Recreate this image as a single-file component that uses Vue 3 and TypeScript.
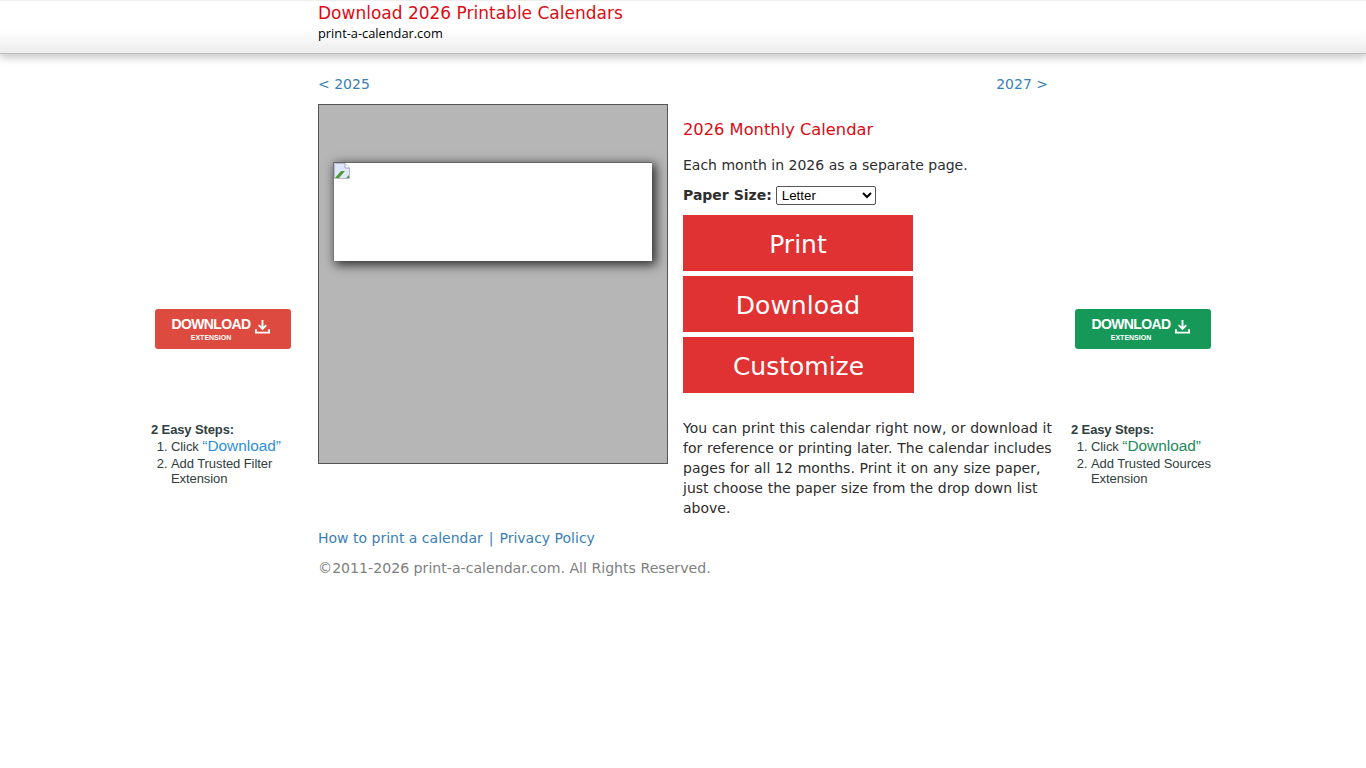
<script setup lang="ts">
const ads = [
  { kind: 'red', item: 'Add Trusted Filter' },
  { kind: 'green', item: 'Add Trusted Sources' },
]
</script>

<template>
  <div class="page">
    <header class="top">
      <div class="top-inner">
        <div class="top-title">Download 2026 Printable Calendars</div>
        <div class="top-sub">print-a-calendar.com</div>
      </div>
    </header>
    <div class="columns">
      <aside class="ad">
        <a class="ad-btn red">
          <span class="ad-lines"><span class="ad-main">DOWNLOAD</span><span class="ad-small">EXTENSION</span></span>
          <svg class="ad-icon" viewBox="0 0 16 16" width="15" height="15" fill="none" stroke="#fff" stroke-width="2"><path d="M8 1v9M4 6.500L8 10.500 12 6.500M1 11v3.500h14V11"/></svg>
        </a>
        <div class="steps">
          <b>2 Easy Steps:</b>
          <ol>
            <li class="first">Click <span class="dl blue">“Download”</span></li>
            <li>{{ ads[0].item }} Extension</li>
          </ol>
        </div>
      </aside>
      <main class="center">
        <nav class="years"><a>&lt; 2025</a><a>2027 &gt;</a></nav>
        <section class="body">
          <div class="preview">
            <div class="sheet">
              <svg class="broken" viewBox="0 0 16 16" width="16" height="16">
                <path d="M0.500 0.500H11L15.500 5V15.500H0.500Z" fill="#dfe8fb" stroke="#b8b8c8" />
                <path d="M11 0.500V5H15.500" fill="#fff" stroke="#a0a0d0" />
                <path d="M1 15L7 8H11L5 15Z" fill="#4c9a35" />
                <path d="M12 15L15 12V15Z" fill="#4c9a35" />
              </svg>
            </div>
          </div>
          <div class="info">
            <h1>2026 Monthly Calendar</h1>
            <p class="lead">Each month in 2026 as a separate page.</p>
            <div class="paper">
              <label for="paper">Paper Size:</label>
              <select id="paper"><option>Letter</option></select>
            </div>
            <div class="actions">
              <a class="act w230">Print</a>
              <a class="act w230">Download</a>
              <a class="act w231">Customize</a>
            </div>
            <p class="desc">You can print this calendar right now, or download it for reference or printing later. The calendar includes pages for all 12 months. Print it on any size paper, just choose the paper size from the drop down list above.</p>
          </div>
        </section>
        <div class="links"><a>How to print a calendar</a><span class="sep">|</span><a>Privacy Policy</a></div>
        <div class="copy">©2011-2026 print-a-calendar.com. All Rights Reserved.</div>
      </main>
      <aside class="ad">
        <a class="ad-btn green">
          <span class="ad-lines"><span class="ad-main">DOWNLOAD</span><span class="ad-small">EXTENSION</span></span>
          <svg class="ad-icon" viewBox="0 0 16 16" width="15" height="15" fill="none" stroke="#fff" stroke-width="2"><path d="M8 1v9M4 6.500L8 10.500 12 6.500M1 11v3.500h14V11"/></svg>
        </a>
        <div class="steps">
          <b>2 Easy Steps:</b>
          <ol>
            <li class="first">Click <span class="dl grn">“Download”</span></li>
            <li>{{ ads[1].item }} Extension</li>
          </ol>
        </div>
      </aside>
    </div>
  </div>
</template>

<style scoped>
.page {
  font-family: "DejaVu Sans", Verdana, sans-serif;
  font-size: 14px;
  color: #2d2d2d;
  background: #fff;
  min-height: 768px;
}
.top {
  height: 54px;
  box-sizing: border-box;
  border-top: 1px solid #eee;
  border-bottom: 1px solid #bdbdbd;
  background: linear-gradient(#fff 0%, #fff 55%, #ececec 100%);
  box-shadow: 0 4px 8px rgba(0, 0, 0, 0.22);
  padding-left: 318px;
}
.top-inner { padding-top: 2px; }
.top-title { color: #dd0b14; font-size: 17px; line-height: 21px; }
.top-sub { color: #000; font-size: 12.8px; line-height: 19px; font-family: "Open Sans", sans-serif; }
.columns { display: flex; align-items: flex-start; }
.ad { width: 167px; box-sizing: border-box; font-family: "Liberation Sans", Arial, sans-serif; }
.columns > .ad:first-child { margin-left: 151px; }
.ad-btn {
  display: flex;
  width: 136px;
  height: 40px;
  margin: 255px 0 0 4px;
  border-radius: 3px;
  color: #fff;
  box-sizing: border-box;
  padding: 7px 0 0 16px;
  gap: 4px;
}
.red { background: #dd4b40; }
.green { background: #169958; }
.ad-lines { display: flex; flex-direction: column; align-items: center; width: 80px; }
.ad-main { font-size: 14px; font-weight: 700; line-height: 17px; letter-spacing: -0.6px; }
.ad-small { font-size: 7px; font-weight: 700; line-height: 9px; }
.ad-icon { margin-top: 3px; }
.steps { margin-top: 73px; font-size: 13px; line-height: 15px; color: #2f3e3e; }
.steps b { display: block; line-height: 16px; letter-spacing: -0.12px; }
.steps ol { margin: 0; padding-left: 20px; }
.steps li { letter-spacing: -0.08px; }
.steps .first { line-height: 16px; margin-bottom: 1px; }
.dl { font-size: 15.400px; letter-spacing: 0; line-height: 15px; }
.blue { color: #2f8fd8; }
.grn { color: #23885a; }
.center { width: 753px; box-sizing: border-box; padding-top: 19px; }
.years { display: flex; justify-content: space-between; width: 730px; line-height: 22px; }
a { color: #3a80b5; }
.body { display: flex; margin-top: 9px; }
.preview {
  width: 350px;
  height: 360px;
  box-sizing: border-box;
  border: 1px solid #555;
  background: #b6b6b6;
  padding: 57px 14px 0;
  flex: none;
}
.sheet {
  width: 319px;
  height: 99px;
  box-sizing: border-box;
  background: #fff;
  border-top: 1px solid #666;
  border-left: 1px solid #777;
  box-shadow: 3px 3px 10px 1px rgba(0, 0, 0, 0.75);
}
.broken { display: block; }
.info { width: 385px; padding-left: 15px; box-sizing: border-box; }
h1 { margin: 15px 0 0; color: #dd0b14; font-size: 16.3px; font-weight: 400; line-height: 22px; }
.lead { margin: 14px 0 0; line-height: 20px; }
.paper { display: flex; align-items: center; gap: 4px; margin-top: 10px; height: 21px; }
label { font-weight: 700; margin-top: -2px; }
select { width: 100px; height: 19px; font: 13.33px "Liberation Sans", Arial, sans-serif; background: #fff; color: #000; border: 1px solid #555; border-radius: 2px; padding: 0 0 0 1px; }
.actions { display: flex; flex-direction: column; gap: 5px; margin-top: 9px; }
.act { display: block; height: 56px; line-height: 60px; background: #e03232; color: #fff; font-size: 25px; text-align: center; }
.w230 { width: 230px; }
.w231 { width: 231px; }
.desc { margin: 25px 0 0; line-height: 20px; word-spacing: 0.3px; }
.links { margin-top: 10px; line-height: 20px; color: #3a80b5; }
.sep { margin: 0 6px; }
.copy { margin-top: 10px; line-height: 20px; color: #808080; font-size: 14.14px; }
</style>
